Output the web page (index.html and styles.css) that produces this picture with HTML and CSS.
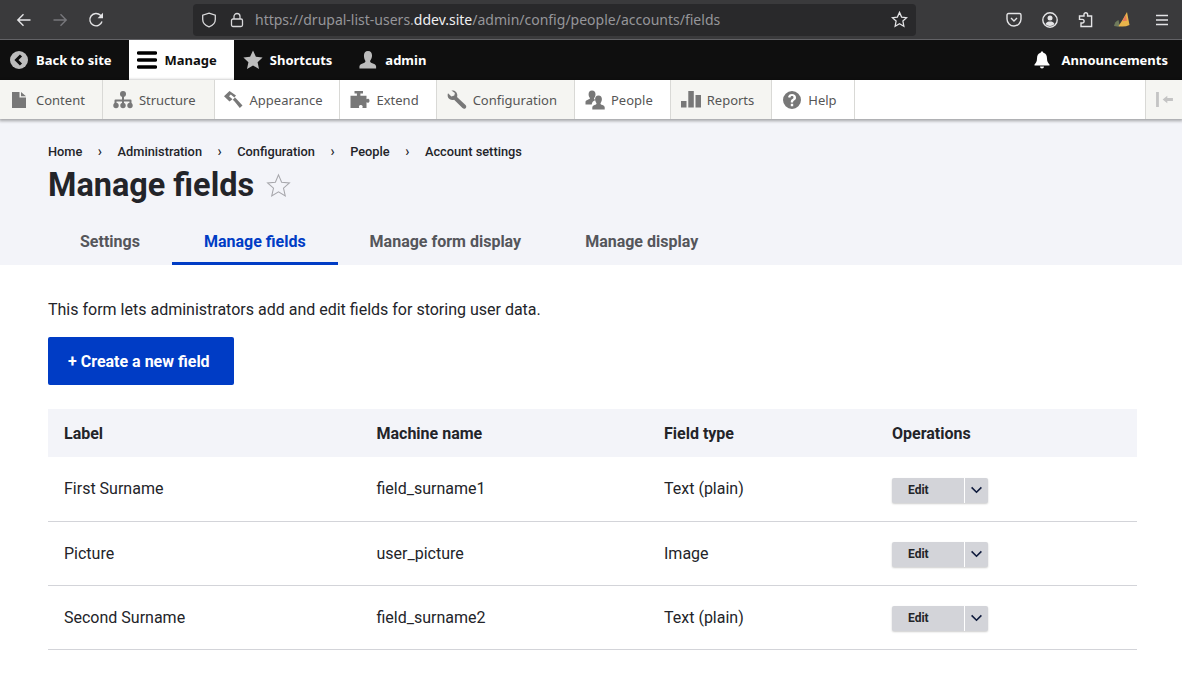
FILE: index.html
```html
<!DOCTYPE html>
<html lang="en">
<head>
  <meta charset="UTF-8" />
  <meta name="viewport" content="width=device-width, initial-scale=1.0" />
  <title>Manage fields</title>
  <link rel="stylesheet" href="styles.css">
</head>
<body>
  <!-- browser chrome -->
  <div class="chrome">
    <div class="chrome-nav">
      <svg class="chrome-icon" viewBox="0 0 16 16"><path d="M14.500 8H1.800M7.500 2.300L1.800 8l5.700 5.700" /></svg>
      <svg class="chrome-icon dim" viewBox="0 0 16 16"><path d="M1.500 8h12.700M8.500 2.300L14.200 8l-5.700 5.700" /></svg>
      <svg class="chrome-icon" viewBox="0 0 16 16"><path d="M14 9.500A6.200 6.200 0 1 1 12.500 3.300L14 5" /><path class="solid" d="M15 .8v5.400H9.600z" /></svg>
    </div>
    <div class="urlbar">
      <svg class="url-icon" viewBox="0 0 16 16"><path d="M8 1.200l6.300 2v4.300c0 3.600-2.800 6-6.300 7.300-3.500-1.300-6.300-3.700-6.300-7.300V3.200z" /></svg>
      <svg class="url-icon" viewBox="0 0 16 16"><rect x="2.500" y="7" width="11" height="7.500" rx="1.500" /><path d="M5 7V4.500a3 3 0 0 1 6 0V7" /></svg>
      <span class="url-text">https://drupal-list-users.<b>ddev.site</b>/admin/config/people/accounts/fields</span>
      <svg class="url-star" viewBox="0 0 16 16"><path d="M8 1.300l2 4.400 4.700.6-3.500 3.200.9 4.800L8 12l-4.100 2.300.9-4.800L1.300 6.300 6 5.700z" /></svg>
    </div>
    <div class="chrome-tools">
      <svg class="chrome-icon" viewBox="0 0 16 16"><path d="M2.500 1.500h11A1.500 1.500 0 0 1 15 3v4A7 7 0 0 1 1 7V3a1.500 1.500 0 0 1 1.500-1.500z" /><path d="M5 6l3 3 3-3" /></svg>
      <svg class="chrome-icon" viewBox="0 0 16 16"><circle cx="8" cy="8" r="7.200" /><circle class="solid" cx="8" cy="6" r="2.500" /><path class="solid" d="M3.500 12c1-2 2.500-2.500 4.500-2.500s3.500.5 4.500 2.500c-1 1.200-2.500 2-4.500 2s-3.500-.8-4.500-2z" /></svg>
      <svg class="chrome-icon" viewBox="0 0 16 16"><path d="M6 2.500a1.800 1.800 0 0 1 3.600 0V4h4v10.500H3V11h1.300a1.800 1.800 0 0 0 0-3.600H1.500V4H6z" /></svg>
      <svg class="chrome-icon broom" viewBox="0 0 16 16"><path class="broom-base" d="M0 14C.5 11 2 9 4.500 8L6 15z" /><path class="broom-head" d="M13 0l2.500 13Q10 15.500 4.500 14C7.500 10 10 5 13 0z" /><path class="broom-tip" d="M11.700 2.800l1.300 6-4.700.4c1.300-2 2.400-4.200 3.400-6.400z" /></svg>
      <svg class="chrome-icon menu" viewBox="0 0 16 16"><path d="M2 3.500h12M2 8h12M2 12.500h12" /></svg>
    </div>
  </div>

  <!-- admin toolbar -->
  <div class="toolbar">
    <a class="bar-item"><svg class="bar-icon" viewBox="0 0 18 18"><circle cx="9" cy="9" r="9" /><path class="cut" d="M11 4.500L6.500 9l4.500 4.500" /></svg>Back to site</a>
    <a class="bar-item active"><svg class="bar-icon burger" viewBox="0 0 20 18"><path d="M1.500 2h17M1.500 9h17M1.500 16h17" /></svg>Manage</a>
    <a class="bar-item star-item"><svg class="bar-icon" viewBox="0 0 20 20"><path d="M10 .5l2.900 6.300 6.700.8-5 4.600 1.400 6.800L10 15.500 4 19l1.400-6.800-5-4.600 6.700-.8z" /></svg>Shortcuts</a>
    <a class="bar-item"><svg class="bar-icon" viewBox="0 0 20 20"><path d="M10 0c3 0 4.500 2.300 4.500 5 0 2.500-1 4.500-2.200 6 0 1.500 1 2 3.200 3 2 .8 3 1.500 3.500 3v2.500H.5V17c.5-1.500 1.500-2.200 3.500-3 2.200-1 3.200-1.500 3.200-3C6 9.500 5.500 7.500 5.500 5 5.500 2.300 7 0 10 0z" /></svg>admin</a>
    <a class="bar-item bar-right"><svg class="bar-icon" viewBox="0 0 18 18"><path d="M9 .5c.8 0 1.300.5 1.300 1.200C13 2.500 14 4.500 14 7.500c0 3 1 4.500 2.500 6v1h-15v-1C3 12 4 10.500 4 7.500c0-3 1-5 3.700-5.800C7.700 1 8.200.5 9 .5zM7 15.500h4a2 2 0 0 1-4 0z" /></svg>Announcements</a>
  </div>

  <div class="tray">
    <a class="tray-item shaded"><svg viewBox="0 0 20 20"><path d="M2 2h7.500v5.500H16V18H2zM11 2l5 4.200h-5z" /></svg>Content</a>
    <a class="tray-item shaded wide"><svg viewBox="0 0 20 20"><circle cx="10" cy="4" r="3" /><circle cx="3" cy="15.500" r="2.700" /><circle cx="10" cy="15.500" r="2.700" /><circle cx="17" cy="15.500" r="2.700" /><path d="M9 5h2v4.500h6.500a1 1 0 0 1 1 1V14h-2v-2.500H11V14H9v-2.500H3.500V14h-2v-3.500a1 1 0 0 1 1-1H9z" /></svg>Structure</a>
    <a class="tray-item"><svg class="over" viewBox="0 0 20 20"><path d="M5.500 1L0 6.300l5.500 5.200 3-2.300-3.500-3 1.800-1.700 3.500 3 1.700-2zM11 7.500l-2.200 2.300 2 2 5 6.200 2.700-2.500-5.500-6z" /></svg>Appearance</a>
    <a class="tray-item"><svg viewBox="0 0 20 20"><path d="M4.500 1h8.500v2.600h-2.600V5.800h6.100v3.400c1-.9 3-.7 3 1.500s-2 2.400-3 1.500V18h-4.200c.8-1 .5-3-1.500-3s-2.300 2-1.500 3H.5V5.800h6.400V3.600H4.500z" /></svg>Extend</a>
    <a class="tray-item shaded"><svg viewBox="0 0 20 20"><path d="M5.500.5c2.700 0 4.800 2.100 4.800 4.800 0 .6-.1 1.200-.3 1.700l8.500 8.100c1 1 1 2.300.1 3.100s-2.100.8-3.100-.1L7.100 9.700C4.700 10.500 1.200 9.300.7 6.200.5 5 .7 4 1 3.300l3.400 3.200 2.900-.9.600-2.700L4.400.6C4.800.5 5.100.5 5.500.5z" /></svg>Configuration</a>
    <a class="tray-item"><svg viewBox="0 0 20 20"><path d="M7 .5c2.300 0 3.500 1.700 3.500 3.800 0 1.800-.7 3-1.500 4 0 .8.500 1.300 1.500 1.800-2 .7-3.400 2-3.800 4.400H.5v-2.800c.3-1 1-1.500 2.300-2 1.500-.7 2.200-1 2.200-1.500C4.200 7.200 3.600 5.900 3.600 4.300 3.600 2.200 4.700.5 7 .5zM13.500 5.500c2.300 0 3.400 1.700 3.400 3.600 0 1.700-.6 3.100-1.400 4.100 0 1 .7 1.400 2 1.900 1.200.5 2 1 2.200 2.200v2.200H7.300v-2.200c.2-1.200 1-1.700 2.200-2.200 1.300-.5 2-.9 2-1.900-.8-1-1.400-2.400-1.400-4.100 0-1.900 1.100-3.600 3.400-3.600z" /></svg>People</a>
    <a class="tray-item shaded"><svg viewBox="0 0 20 20"><path d="M0 11h5.500v6.500H0zM7.300 1h5.500v16.500H7.300zM14.500 5H20v12.500h-5.500z" /></svg>Reports</a>
    <a class="tray-item"><svg viewBox="0 0 20 20"><path fill-rule="evenodd" d="M10 1a9 9 0 1 1 0 18 9 9 0 0 1 0-18zM8.800 13.800v2.400h2.400v-2.400zM10 4C7.800 4 6.300 5.200 6 7.300l2.300.4C8.500 6.700 9 6.100 10 6.100c.9 0 1.500.5 1.500 1.300 0 .7-.4 1.100-1.100 1.600-1.200.8-1.600 1.500-1.600 2.900v.5h2.300v-.3c0-.8.200-1.100 1-1.700C14 9.600 14 8.500 14 7.500 14 5.300 12.300 4 10 4z" /></svg>Help</a>
    <span class="tray-fill"></span>
    <a class="tray-toggle"><svg viewBox="0 0 20 16"><path d="M1 0h3v16H1zM8 8l5-4v2.500h6v3h-6V12z" /></svg></a>
  </div>

  <!-- page header -->
  <div class="page-head">
    <ol class="crumbs">
      <li>Home</li>
      <li>Administration</li>
      <li>Configuration</li>
      <li>People</li>
      <li>Account settings</li>
    </ol>
    <div class="title-row">
      <h1>Manage fields</h1>
      <svg class="title-star" viewBox="0 0 24 24"><path d="M12 1.800l3 7 7.500.7-5.700 5 1.700 7.500-6.500-3.900L5.500 22l1.700-7.500-5.700-5 7.500-.7z" /></svg>
    </div>
    <ul class="tabs">
      <li>Settings</li>
      <li class="current">Manage fields</li>
      <li>Manage form display</li>
      <li>Manage display</li>
    </ul>
  </div>

  <!-- main content -->
  <div class="content">
    <p class="intro">This form lets administrators add and edit fields for storing user data.</p>
    <a class="create-btn">+ Create a new field</a>
    <table class="fields">
      <thead>
        <tr><th class="col-label">Label</th><th class="col-machine">Machine name</th><th class="col-type">Field type</th><th>Operations</th></tr>
      </thead>
      <tbody>
        <tr>
          <td>First Surname</td><td>field_surname1</td><td>Text (plain)</td>
          <td><div class="drop"><span class="drop-main">Edit</span><span class="drop-toggle"><svg viewBox="0 0 14 9"><path d="M1.500 1.500L7 7l5.500-5.500" /></svg></span></div></td>
        </tr>
        <tr>
          <td>Picture</td><td>user_picture</td><td>Image</td>
          <td><div class="drop"><span class="drop-main">Edit</span><span class="drop-toggle"><svg viewBox="0 0 14 9"><path d="M1.500 1.500L7 7l5.500-5.500" /></svg></span></div></td>
        </tr>
        <tr>
          <td>Second Surname</td><td>field_surname2</td><td>Text (plain)</td>
          <td><div class="drop"><span class="drop-main">Edit</span><span class="drop-toggle"><svg viewBox="0 0 14 9"><path d="M1.500 1.500L7 7l5.500-5.500" /></svg></span></div></td>
        </tr>
      </tbody>
    </table>
  </div>
</body>
</html>
```

FILE: styles.css
```css
/* Reset */
html, body {
  margin: 0;
  padding: 0;
  height: 100%;
  overflow: hidden;
  background-color: #fff;
  font-family: Roboto, sans-serif;
  color: #232429;
}

/* Browser chrome */
.chrome {
  display: flex;
  align-items: center;
  height: 39px;
  background-color: #3a3a3c;
  border-bottom: 1px solid #626266;
}
.chrome-nav {
  display: flex;
  gap: 20px;
  width: 193px;
  padding-left: 16px;
  box-sizing: border-box;
}
.chrome-icon {
  width: 16px;
  height: 16px;
  fill: none;
  stroke: #e4e4e6;
  stroke-width: 1.400;
}
.chrome-icon.dim { stroke: #77777b; }
.chrome-icon .solid { fill: #e4e4e6; stroke: none; }
.urlbar {
  display: flex;
  align-items: center;
  width: 723px;
  height: 32px;
  background-color: #29292b;
  border-radius: 4px;
  padding: 0 8px;
  box-sizing: border-box;
  font-family: "Noto Sans", sans-serif;
  font-size: 14px;
  color: #96969a;
}
.urlbar b { font-weight: 400; color: #f0f0f2; }
.url-icon {
  width: 16px;
  height: 16px;
  margin-right: 12px;
  fill: none;
  stroke: #d8d8da;
  stroke-width: 1.300;
}
.url-text { flex: 1; margin-left: -2px; white-space: nowrap; }
.url-star {
  width: 17px;
  height: 17px;
  fill: none;
  stroke: #e4e4e6;
  stroke-width: 1.200;
}
.chrome-tools {
  display: flex;
  gap: 20px;
  margin-left: 90px;
}
.chrome-icon.menu { margin-left: 4px; }
.broom .broom-base { fill: #6f7a5c; stroke: none; }
.broom .broom-head { fill: #e8b44a; stroke: none; }
.broom .broom-tip { fill: #e8795a; stroke: none; }

/* Admin toolbar */
.toolbar {
  display: flex;
  height: 40px;
  background-color: #0f0f0f;
  font-family: "Noto Sans", sans-serif;
  font-size: 13px;
  font-weight: 700;
  color: #fff;
}
.bar-item {
  display: flex;
  align-items: center;
  gap: 8px;
  padding: 0 17px 0 10px;
  box-sizing: border-box;
}
.bar-item.active {
  background-color: #fff;
  color: #0f0f0f;
  padding: 0 17px 0 8px;
}
.bar-item.star-item { padding-left: 9px; gap: 7px; }
.bar-right { margin-left: auto; gap: 11px; padding-right: 14px; }
.bar-icon {
  width: 18px;
  height: 18px;
  fill: #bcbcbc;
}
.star-item .bar-icon { width: 20px; height: 20px; }
.bar-right .bar-icon { fill: #fff; }
.bar-icon .cut { fill: none; stroke: #0f0f0f; stroke-width: 3; }
.bar-icon.burger {
  width: 20px;
  fill: none;
  stroke: #000;
  stroke-width: 3.500;
  stroke-linecap: round;
}

/* Toolbar tray */
.tray {
  display: flex;
  height: 39px;
  background-color: #fff;
  box-shadow: 0 1px 3px 1px rgba(0, 0, 0, 0.33);
  position: relative;
  font-family: "Noto Sans", sans-serif;
  font-size: 13px;
  color: #565656;
}
.tray-item {
  display: flex;
  align-items: center;
  gap: 6px;
  padding: 0 17px 0 10px;
  border-right: 1px solid #d9d9d6;
  box-sizing: border-box;
}
.tray-item.shaded { background-color: #f5f5f2; }
.tray-item.wide { padding-right: 18px; }
.tray-item svg {
  width: 20px;
  height: 20px;
  fill: #787878;
  flex-shrink: 0;
}
.tray-item svg.over { overflow: visible; margin-left: -1px; }
.tray-fill { flex: 1; }
.tray-toggle {
  display: flex;
  align-items: center;
  justify-content: center;
  width: 37px;
  background-color: #f5f5f2;
  border-left: 1px solid #d9d9d6;
  box-sizing: border-box;
}
.tray-toggle svg { width: 19px; height: 15px; fill: #c4c4c4; }

/* Page header */
.page-head {
  height: 146px;
  background-color: #f3f4f9;
  padding: 25px 48px 0;
  box-sizing: border-box;
}
.crumbs {
  display: flex;
  list-style: none;
  margin: 0;
  padding: 0;
  font-size: 12.800px;
  font-weight: 500;
  line-height: 16px;
  color: #232429;
}
.crumbs li + li::before {
  content: "\203A";
  margin: 0 15.500px;
  font-size: 14px;
  line-height: 0;
}
.title-row {
  display: flex;
  align-items: center;
  gap: 12px;
  margin-top: 5px;
}
h1 {
  margin: 0;
  font-size: 32.440px;
  line-height: 41px;
  font-weight: 700;
  color: #232429;
}
.title-star {
  width: 25px;
  height: 25px;
  fill: none;
  stroke: #a6a6ab;
  stroke-width: 1;
}
.tabs {
  display: flex;
  list-style: none;
  margin: 12px 0 0;
  padding: 0;
  font-size: 16px;
  font-weight: 700;
  color: #55565b;
}
.tabs li {
  height: 47px;
  line-height: 48px;
  padding: 0 32px;
  box-sizing: border-box;
}
.tabs .current {
  color: #003cc5;
  border-bottom: 3px solid #003cc5;
}

/* Main content */
.content { padding: 0 45px 0 48px; }
.intro {
  margin: 35px 0 0;
  font-size: 16px;
  line-height: 20px;
  color: #232429;
}
.create-btn {
  display: inline-block;
  margin-top: 17px;
  padding: 0 24px 0 20px;
  height: 48px;
  line-height: 49px;
  background-color: #003cc5;
  color: #fff;
  font-size: 16px;
  font-weight: 700;
  border-radius: 2px;
}
.fields {
  width: 100%;
  margin-top: 24px;
  border-collapse: collapse;
  table-layout: fixed;
  font-size: 16px;
}
.fields th {
  height: 48px;
  padding: 0 16px;
  background-color: #f3f4f9;
  text-align: left;
  font-weight: 700;
}
.col-label { width: 280.500px; }
.col-machine { width: 255.500px; }
.col-type { width: 196px; }
.fields td {
  height: 64px;
  padding: 0 16px;
  border-bottom: 1px solid #d3d4d9;
  box-sizing: border-box;
}
.drop {
  display: flex;
  width: 96px;
  height: 25px;
  margin-top: 2px;
  background-color: #d3d4d9;
  border-radius: 2px;
  box-shadow: 0 1px 2px rgba(0, 0, 0, 0.2);
  font-size: 12px;
  font-weight: 700;
  line-height: 25px;
}
tbody tr:first-child .drop { margin-top: 3px; }
.drop-main {
  width: 73px;
  padding-left: 16px;
  box-sizing: border-box;
  border-right: 1px solid #fff;
}
.drop-toggle {
  display: flex;
  align-items: center;
  justify-content: center;
  flex: 1;
}
.drop-toggle svg {
  width: 13px;
  height: 8px;
  fill: none;
  stroke: #0f1b3d;
  stroke-width: 1.800;
}
```
